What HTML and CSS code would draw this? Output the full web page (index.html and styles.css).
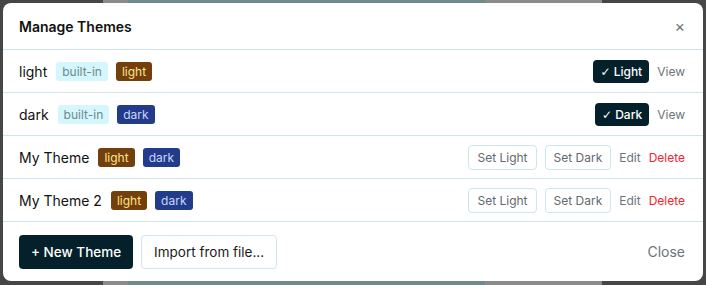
FILE: index.html
```html
<!DOCTYPE html>
<html lang="en">
<head>
    <meta charset="UTF-8">
    <title>Manage Themes</title>
    <link rel="stylesheet" href="styles.css">
</head>
<body>
    <div class="modal">
        <header class="modal-head">
            <h2>Manage Themes</h2>
            <button class="close-x">&times;</button>
        </header>
        <div class="theme-row">
            <span class="name">light</span>
            <span class="badge builtin">built-in</span>
            <span class="badge light">light</span>
            <div class="actions">
                <button class="btn dark-btn"><span class="check">&#10003;</span> Light</button>
                <button class="link">View</button>
            </div>
        </div>
        <div class="theme-row">
            <span class="name">dark</span>
            <span class="badge builtin">built-in</span>
            <span class="badge dark">dark</span>
            <div class="actions">
                <button class="btn dark-btn"><span class="check">&#10003;</span> Dark</button>
                <button class="link">View</button>
            </div>
        </div>
        <div class="theme-row">
            <span class="name">My Theme</span>
            <span class="badge light">light</span>
            <span class="badge dark">dark</span>
            <div class="actions">
                <button class="btn outline">Set Light</button>
                <button class="btn outline">Set Dark</button>
                <button class="link">Edit</button>
                <button class="link danger">Delete</button>
            </div>
        </div>
        <div class="theme-row">
            <span class="name">My Theme 2</span>
            <span class="badge light">light</span>
            <span class="badge dark">dark</span>
            <div class="actions">
                <button class="btn outline">Set Light</button>
                <button class="btn outline">Set Dark</button>
                <button class="link">Edit</button>
                <button class="link danger">Delete</button>
            </div>
        </div>
        <footer class="modal-foot">
            <button class="big dark-btn">+ New Theme</button>
            <button class="big outline">Import from file...</button>
            <button class="link close">Close</button>
        </footer>
    </div>
</body>
</html>
```

FILE: styles.css
```css
body {
    margin: 0;
    padding: 3px 3px 4px 3px;
    font-family: Inter, "Liberation Sans", sans-serif;
    color: #111;
    background: linear-gradient(to right, #464646 0 103px, #8b8b8b 103px 128px, #728a8a 128px 485px, #8b8b8b 485px 602px, #464646 602px);
}

button {
    font-family: inherit;
    cursor: pointer;
}

.modal {
    background-color: #ffffff;
    border-radius: 8px;
    height: 278px;
    display: flex;
    flex-direction: column;
    overflow: hidden;
}

.modal-head {
    height: 46px;
    padding: 0 16px;
    display: flex;
    align-items: center;
    justify-content: space-between;
    border-bottom: 1px solid #cfe5ec;
}

.modal-head h2 {
    margin: 0;
    font-size: 14px;
    font-weight: 600;
}

.close-x {
    background: none;
    border: none;
    padding: 0 2px;
    font-size: 16px;
    color: #6b7479;
}

.theme-row {
    height: 42px;
    padding: 0 18px 0 16px;
    display: flex;
    align-items: center;
    gap: 8px;
    border-bottom: 1px solid #cfe5ec;
}

.name {
    font-size: 14px;
    margin-right: 1px;
}

.badge {
    font-size: 12px;
    line-height: 19px;
    padding: 0 6px;
    border-radius: 3px;
}

.badge.builtin {
    background-color: #d4f6fc;
    color: #6e8a90;
}

.badge.light {
    background-color: #733f0c;
    color: #fde68a;
}

.badge.dark {
    background-color: #233b8b;
    color: #c9d6fb;
}

.actions {
    margin-left: auto;
    display: flex;
    align-items: center;
    gap: 8px;
}

.btn {
    font-size: 12px;
    border-radius: 4px;
    padding: 0 8px;
}

.dark-btn {
    background-color: #04212b;
    color: #ffffff;
    border: none;
}

.btn.dark-btn {
    height: 23px;
    padding: 0 7px;
    font-weight: 500;
}

.check {
    font-family: "DejaVu Sans", sans-serif;
    font-size: 12px;
}

.outline {
    background-color: #ffffff;
    border: 1px solid #cde5ec;
}

.btn.outline {
    height: 25px;
    padding: 0 8px;
    color: #5f6a70;
}

.link {
    background: none;
    border: none;
    padding: 0;
    font-size: 12px;
    color: #6b7479;
}

.link.danger {
    color: #f0262f;
}

.modal-foot {
    flex: 1;
    padding: 0 18px 0 16px;
    display: flex;
    align-items: center;
    gap: 8px;
}

.big {
    height: 34px;
    border-radius: 4px;
    font-size: 13.5px;
    padding: 0 12px;
}

.big.dark-btn {
    font-weight: 500;
}

.big.outline {
    color: #1b1b1b;
}

.link.close {
    margin-left: auto;
    font-size: 14px;
}
```
